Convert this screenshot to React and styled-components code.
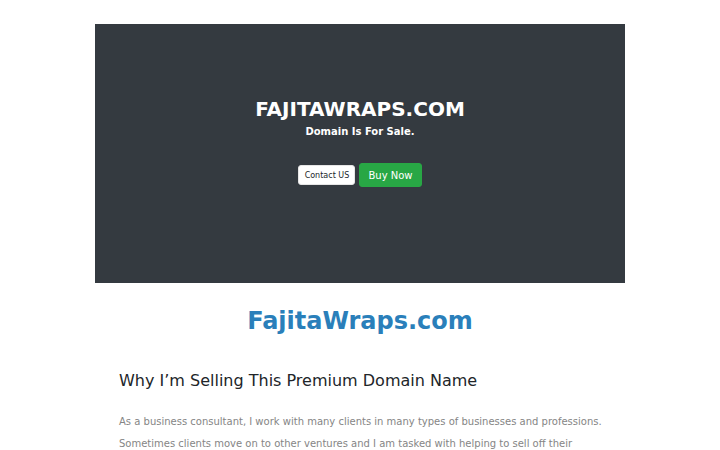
import React from 'react';
import styled, { createGlobalStyle } from 'styled-components';

const GlobalStyle = createGlobalStyle`
  body {
    margin: 0;
    background: #ffffff;
    font-family: "DejaVu Sans", "Liberation Sans", sans-serif;
  }
`;

const Page = styled.div`
  width: 530px;
  margin: 24px auto 0 auto;
`;

const Hero = styled.section`
  height: 259px;
  box-sizing: border-box;
  padding-top: 73px;
  background-color: #343a40;
  color: #ffffff;
  display: flex;
  flex-direction: column;
  align-items: center;
`;

const HeroTitle = styled.h1`
  margin: 0;
  font-size: 20px;
  line-height: 24px;
  font-weight: 700;
`;

const HeroSubtitle = styled.p`
  margin: 4px 0 0 0;
  font-size: 10px;
  line-height: 14px;
  font-weight: 700;
`;

const Actions = styled.div`
  display: flex;
  align-items: center;
  gap: 4px;
  margin-top: 24px;
`;

const Button = styled.a`
  display: inline-flex;
  align-items: center;
  justify-content: center;
  box-sizing: border-box;
  border-radius: 3px;
  text-decoration: none;
  cursor: pointer;
  height: ${(p) => (p.large ? '24px' : '20px')};
  min-width: ${(p) => (p.large ? '61px' : '57px')};
  padding: ${(p) => (p.large ? '0 8px' : '0 5px')};
  font-size: ${(p) => (p.large ? '10px' : '8px')};
  background-color: ${(p) => (p.variant === 'success' ? '#28a745' : '#ffffff')};
  color: ${(p) => (p.variant === 'success' ? '#ffffff' : '#212529')};
  border: 1px solid ${(p) => (p.variant === 'success' ? '#28a745' : '#e6e6e6')};
`;

const DomainName = styled.h2`
  margin: 23px 0 0 0;
  text-align: center;
  font-size: 24px;
  line-height: 30px;
  font-weight: 700;
  color: #2a7fba;
`;

const Article = styled.article`
  padding: 0 16px 0 24px;
`;

const SectionTitle = styled.h3`
  margin: 35px 0 0 0;
  font-size: 16px;
  line-height: 20px;
  font-weight: 400;
  color: #212529;
`;

const Paragraph = styled.p`
  margin: 20px 0 0 0;
  font-size: 10px;
  line-height: 22px;
  color: #858585;
`;

export default function App() {
  return (
    <>
      <GlobalStyle />
      <Page>
        <Hero>
          <HeroTitle>FAJITAWRAPS.COM</HeroTitle>
          <HeroSubtitle>Domain Is For Sale.</HeroSubtitle>
          <Actions>
            <Button>Contact US</Button>
            <Button large variant="success">Buy Now</Button>
          </Actions>
        </Hero>
        <DomainName>FajitaWraps.com</DomainName>
        <Article>
          <SectionTitle>Why I’m Selling This Premium Domain Name</SectionTitle>
          <Paragraph>
            As a business consultant, I work with many clients in many types of businesses and professions.
            Sometimes clients move on to other ventures and I am tasked with helping to sell off their
            domain names and other assets.
          </Paragraph>
        </Article>
      </Page>
    </>
  );
}
